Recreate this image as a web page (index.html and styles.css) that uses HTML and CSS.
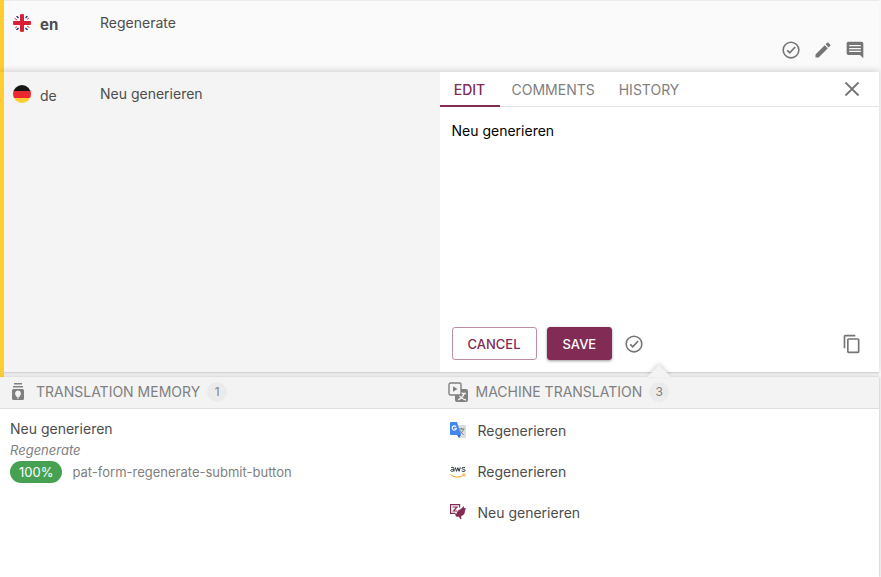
FILE: index.html
```html
<!DOCTYPE html>
<html lang="en">
<head>
<meta charset="utf-8">
<title>Translations</title>
<link rel="stylesheet" href="styles.css">
</head>
<body>
<svg class="defs" aria-hidden="true">
  <symbol id="check-circle" viewBox="0 0 24 24"><circle cx="12" cy="12" r="9.400" fill="none" stroke="currentColor" stroke-width="1.900"/><path d="M7.500 12.400l3 3 6.500-7" fill="none" stroke="currentColor" stroke-width="2.100"/></symbol>
</svg>
<main class="page">
  <div class="rows">
    <section class="row row-base">
      <div class="language">
        <svg class="flag" viewBox="0 0 18 18" aria-hidden="true">
          <defs><clipPath id="disc"><circle cx="9" cy="9" r="9"/></clipPath></defs>
          <g clip-path="url(#disc)"><path fill="#fff" d="M0 0h18v18H0z"/><path stroke="#29337a" stroke-width="1.500" d="M3.500 2l2 2M14.500 2l-2 2M3.500 16l2-2M14.500 16l-2-2"/><path stroke="#d91f35" stroke-width=".9" d="M1 4l3 2M14 5.500l3-2.500M1 15l3-2.500M14 12l3 2"/><path fill="#d91f35" d="M7 0h4v7h7v4h-7v7H7v-7H0V7h7z"/></g>
        </svg>
        <strong>en</strong>
      </div>
      <div class="source">Regenerate</div>
      <div class="row-actions">
        <button class="icon-button" aria-label="Mark as reviewed"><svg><use href="#check-circle"/></svg></button>
        <button class="icon-button" aria-label="Edit"><svg viewBox="0 0 24 24"><path d="M3 17.250V21h3.750L17.810 9.940l-3.750-3.750L3 17.250zM20.710 7.040a1 1 0 0 0 0-1.410l-2.340-2.340a1 1 0 0 0-1.410 0l-1.830 1.830 3.750 3.750 1.830-1.830z"/></svg></button>
        <button class="icon-button" aria-label="Comments"><svg viewBox="0 0 24 24"><path d="M21.990 4c0-1.100-.890-2-1.990-2H4c-1.100 0-2 .9-2 2v12c0 1.100.9 2 2 2h14l4 4-.010-18zM19 14.500H5v-1.500h14v1.500zm0-3.500H5V9.500h14V11zm0-3.500H5V6h14v1.500z"/></svg></button>
      </div>
    </section>
    <section class="row row-active">
      <div class="language">
        <svg class="flag" viewBox="0 0 18 18" aria-hidden="true"><g clip-path="url(#disc)"><path fill="#171717" d="M0 0h18v6H0z"/><path fill="#ed2730" d="M0 6h18v7H0z"/><path fill="#ffcd32" d="M0 13h18v5H0z"/></g></svg>
        <span>de</span>
      </div>
      <div class="source">Neu generieren</div>
      <div class="editor">
        <nav class="tabs">
          <button class="tab tab-current">EDIT</button>
          <button class="tab">COMMENTS</button>
          <button class="tab">HISTORY</button>
          <button class="icon-button close" aria-label="Close"><svg viewBox="0 0 20 20"><path fill="none" stroke="currentColor" stroke-width="1.800" d="M3.500 3.500l13 13M16.500 3.500l-13 13"/></svg></button>
        </nav>
        <textarea class="text" aria-label="Translation">Neu generieren</textarea>
        <div class="controls">
          <button class="button">CANCEL</button>
          <button class="button button-primary">SAVE</button>
          <button class="icon-button review" aria-label="Mark as reviewed"><svg><use href="#check-circle"/></svg></button>
          <button class="icon-button copy" aria-label="Copy source"><svg viewBox="0 0 24 24"><path d="M16 1H4c-1.100 0-2 .9-2 2v14h2V3h12V1zm3 4H8c-1.100 0-2 .9-2 2v14c0 1.100.9 2 2 2h11c1.100 0 2-.9 2-2V7c0-1.100-.9-2-2-2zm0 16H8V7h11v14z"/></svg></button>
        </div>
      </div>
    </section>
  </div>
  <div class="tools">
    <section class="tool">
      <h2 class="tool-head">
        <svg class="memory-icon" viewBox="0 0 18 20" aria-hidden="true"><path d="M5 1h8v1.500H5zM4 4h10v1.500H4zM4.500 7h9A1.500 1.500 0 0 1 15 8.500v8a1.500 1.500 0 0 1-1.500 1.500h-9A1.500 1.500 0 0 1 3 16.500v-8A1.500 1.500 0 0 1 4.500 7z"/><path fill="#f3f3f3" d="M9 8.500a3 3 0 0 0-1.600 5.500v1h3.200v-1A3 3 0 0 0 9 8.500zM8 15.500h2v1H8z"/></svg>
        TRANSLATION MEMORY <span class="count">1</span>
      </h2>
      <div class="memory">
        <div class="memory-target">Neu generieren</div>
        <em class="memory-source">Regenerate</em>
        <div class="memory-meta"><span class="match">100%</span><span>pat-form-regenerate-submit-button</span></div>
      </div>
    </section>
    <section class="tool tool-machine">
      <h2 class="tool-head">
        <svg class="machine-icon" viewBox="0 0 20 20" aria-hidden="true"><rect x="7" y="7" width="13" height="13" rx="2"/><path fill="none" stroke="#f3f3f3" stroke-width="1.300" d="M9 11.500h9M13.500 10v1.500M16 11.500c-.6 3-3 5-6 6.500M11 13c1.500 2.500 4 4.300 7 5"/><rect x="1" y="1" width="12" height="12" rx="1.500" fill="#f3f3f3" stroke="currentColor" stroke-width="1.400"/><path d="M5 4.200v5.600l4.500-2.800z"/></svg>
        MACHINE TRANSLATION <span class="count count-open">3</span>
      </h2>
      <ul class="results">
        <li><svg class="provider" viewBox="0 0 16 16" aria-hidden="true"><path fill="#dcdcdc" d="M6 3h9a1 1 0 0 1 1 1v11a1 1 0 0 1-1 1H9z"/><path fill="none" stroke="#747f88" d="M8.500 7h6M11.500 6v1M13.500 7c-.4 2-1.500 3.500-3.500 4.500M10 8.500c.7 1.700 2 3 3.500 4"/><path fill="#3569d5" d="M7 13h4l-2 3z"/><path fill="#4285f4" d="M1 0h6l4 13H1a1 1 0 0 1-1-1V1a1 1 0 0 1 1-1z"/><path fill="none" stroke="#fff" stroke-width="1.100" d="M6 4.700A2.100 2.100 0 1 0 6.400 6.300H4.500"/></svg>Regenerieren</li>
        <li><svg class="provider" viewBox="0 0 16 16" aria-hidden="true"><g fill="none" stroke="#29343f" stroke-width="1"><path d="M1 4.800c1-.8 3-.7 3 .7v3M4 6.300c-4-.4-4 2.500-1.500 2 .8-.1 1.500-.7 1.500-1.300M5.300 4.300l1.200 4 1.300-3.600 1.300 3.600 1.200-4M15 4.700c-1.500-.6-3-.3-3 .6 0 1.500 3.200.7 3.200 2.200 0 1-2 1.200-3.500.5"/><path stroke="#f49a2c" d="M.500 11.500c4 3.300 9.500 3.300 13.500.5M12.500 11.200h2.500c.3.500-.1 1.500-.7 2.300"/></g></svg>Regenerieren</li>
        <li><svg class="provider" viewBox="0 0 16 16" aria-hidden="true"><path fill="none" stroke="#822b55" stroke-width="1.200" d="M5.500 9.400H.600V.600h9v3M2.500 3h4.500L3.500 7h3.500"/><path fill="#822b55" d="M10 5.500l2-1.500L13.500 2l.5 2L16 4.500 14.800 7c.5 2.500-1.300 4.500-3.800 5.200L11.500 15h-1.300l-1.400-2.500C7 13.200 5.500 12.500 5.500 11L5 10l1.700-.5C7 7.500 8.200 6 10 5.500z"/></svg>Neu generieren</li>
      </ul>
    </section>
  </div>
</main>
</body>
</html>
```
FILE: styles.css
```css
* { box-sizing: border-box; }
body {
  margin: 0;
  background: #f7f7f7;
  color: #4d4d4d;
  font: 14px/20px Inter, "Liberation Sans", sans-serif;
}
button { margin: 0; padding: 0; border: 0; background: none; font: inherit; color: inherit; }
svg { display: block; fill: currentColor; }
.defs { position: absolute; width: 0; height: 0; }
.page {
  display: flex;
  flex-direction: column;
  min-height: 100vh;
  margin-right: 2px;
}
.rows {
  border-left: 4px solid #ffcd32;
  padding-bottom: 4px;
  background: #ededed;
}
.row { display: flex; }
.row-base {
  min-height: 72px;
  padding-top: 12px;
  border-top: 1px solid #ebebeb;
  background: #fafafa;
}
.row-active {
  position: relative;
  min-height: 301px;
  margin-left: -4px;
  border-left: 4px solid #ffcd32;
  border-bottom: 1px solid #d2d2d2;
  background: #f4f4f4;
  box-shadow: 0 -2px 6px rgba(0, 0, 0, .14);
}
.row-active > .language, .row-active > .source { padding-top: 12px; }
.language { display: flex; gap: 9px; width: 96px; padding-left: 9px; line-height: 24px; }
.language strong { font-size: 15px; }
.flag { width: 18px; height: 18px; flex: none; margin-top: 1px; }
.source { flex: 1; }
.row-actions {
  display: flex;
  align-self: flex-end;
  gap: 12px;
  padding: 0 14px 12px 0;
}
.icon-button { color: #757575; }
.icon-button svg { width: 20px; height: 20px; }
.editor {
  display: flex;
  flex-direction: column;
  width: calc(50% + 2px);
  flex: none;
  background: #fff;
}
.tabs {
  display: flex;
  height: 35px;
  border-bottom: 1px solid #e5e5e5;
  color: #808080;
}
.tab { height: 35px; padding: 2px 12px 0; border-bottom: 2px solid transparent; }
.tab-current { width: 60px; border-color: #822b55; color: #822b55; font-weight: 500; }
.close { margin: 0 17px 0 auto; }
.text {
  flex: 1;
  width: 100%;
  padding: 14px 12px;
  border: 0;
  outline: 0;
  resize: none;
  background: transparent;
  color: #000;
  font: inherit;
}
.controls { display: flex; align-items: center; gap: 10px; padding: 0 17px 12px 12px; }
.button {
  height: 33px;
  padding: 0 15px;
  border: 1px solid #c08da8;
  border-radius: 3px;
  color: #822b55;
  font-size: 13px;
  font-weight: 500;
}
.button-primary {
  border-color: #822b55;
  background: #822b55;
  color: #fff;
  box-shadow: 0 1px 3px rgba(0, 0, 0, .4);
}
.review { margin-left: 2px; }
.copy { margin-left: auto; }
.tools {
  display: grid;
  grid-template-columns: 1fr 1fr;
  flex: 1;
  background: #fff;
  box-shadow: 1px 0 2px rgba(0, 0, 0, .15);
}
.tool-head {
  display: flex;
  align-items: center;
  height: 32px;
  margin: 0;
  padding: 0 0 1px 9px;
  border-bottom: 1px solid #dedede;
  background: #f3f3f3;
  color: #808080;
  font-size: 14px;
  font-weight: 400;
}
.tool-machine .tool-head { padding-left: 8px; }
.memory-icon { width: 18px; height: 20px; margin-right: 9px; }
.machine-icon { width: 20px; height: 20px; margin-right: 8px; }
.count {
  position: relative;
  width: 20px;
  margin-left: 7px;
  border-radius: 10px;
  background: #ebebeb;
  font-size: 12px;
  text-align: center;
}
.count-open::before {
  content: "";
  position: absolute;
  left: -2px;
  bottom: 25px;
  border: 12px solid transparent;
  border-top: 0;
  border-bottom-color: #f3f3f3;
  filter: drop-shadow(0 -2px 2px rgba(0, 0, 0, .15));
}
.memory { padding: 10px; }
.memory-source { display: block; color: #808080; font-size: 13px; line-height: 22px; }
.memory-meta { display: flex; align-items: center; gap: 10px; color: #808080; font-size: 13px; }
.match { padding: 1px 9px; border-radius: 11px; background: #46a252; color: #fff; }
.results { margin: 0; padding: 12px 10px; list-style: none; }
.results li { display: flex; align-items: center; gap: 12px; margin-bottom: 21px; }
.provider { width: 16px; height: 16px; margin-bottom: 3px; }
```
